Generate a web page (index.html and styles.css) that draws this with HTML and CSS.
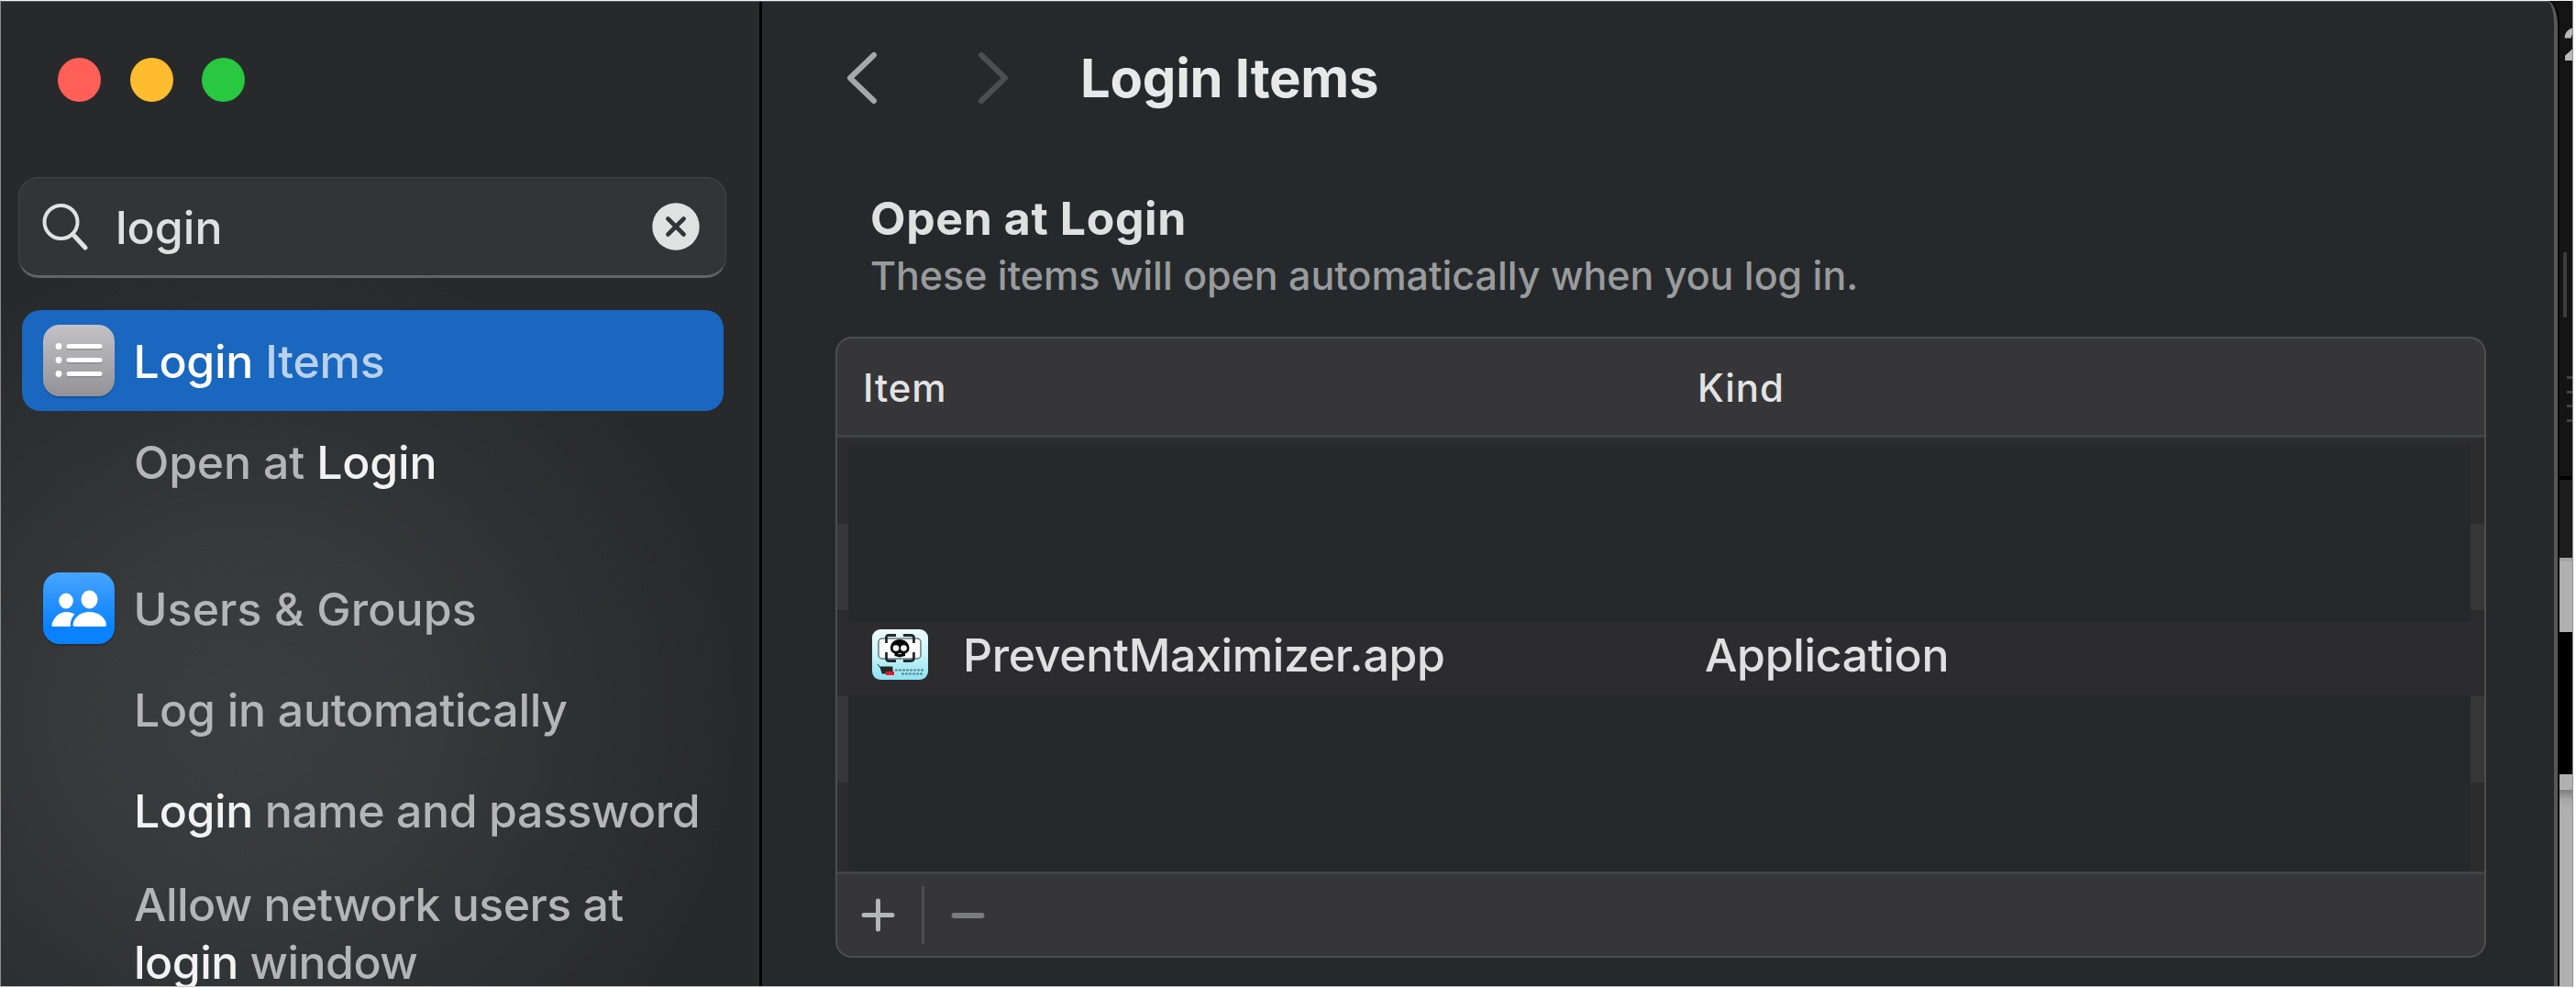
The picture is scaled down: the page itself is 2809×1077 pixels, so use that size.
FILE: index.html
```
<!DOCTYPE html>
<html lang="en">
<head>
<meta charset="utf-8">
<title>Login Items</title>
<link rel="stylesheet" href="styles.css">
</head>
<body>
<div class="screen">
  <div class="window">
    <aside class="sidebar">
      <div class="lights">
        <span class="light red"></span><span class="light yellow"></span><span class="light green"></span>
      </div>
      <div class="search">
        <svg class="search-icon" width="52" height="54" viewBox="0 0 52 54" fill="none" stroke="#e0e1e1" stroke-linecap="round"><circle cx="21.5" cy="22" r="18" stroke-width="4"/><path d="M35 36 48 50" stroke-width="5"/></svg>
        <span class="query">login</span>
        <svg width="52" height="52" viewBox="0 0 52 52"><circle cx="26" cy="26" r="25.7" fill="#e0e1e1"/><path d="M17.500 17.500 34.500 34.500M34.500 17.500 17.500 34.500" stroke="#333435" stroke-width="4.600" stroke-linecap="round"/></svg>
      </div>
      <nav class="results">
        <div class="row selected">
          <svg class="tile" width="80" height="82" viewBox="0 0 80 82">
            <defs><linearGradient id="gray" x2="0" y2="1"><stop offset="0" stop-color="#c3c2c7"/><stop offset="1" stop-color="#929196"/></linearGradient></defs>
            <rect x="1" y="3" width="78" height="78" rx="18" fill="#11498c" opacity=".6"/>
            <rect x="1" y="1" width="78" height="78" rx="18" fill="url(#gray)"/>
            <g fill="#7b7a7f" opacity=".6"><rect x="26.500" y="24" width="39" height="4.600" rx="2.300"/><rect x="26.500" y="39" width="39" height="4.600" rx="2.300"/><rect x="26.500" y="54" width="39" height="4.600" rx="2.300"/></g>
            <g fill="#fff"><circle cx="18" cy="24.500" r="3.400"/><circle cx="18" cy="39.500" r="3.400"/><circle cx="18" cy="54.500" r="3.400"/><rect x="26.500" y="22" width="39" height="5" rx="2.500"/><rect x="26.500" y="37" width="39" height="5" rx="2.500"/><rect x="26.500" y="52" width="39" height="5" rx="2.500"/></g>
          </svg>
          <span class="label"><b>Login</b> Items</span>
        </div>
        <div class="row sub"><span class="label">Open at <b>Login</b></span></div>
        <div class="row group">
          <svg class="tile" width="80" height="82" viewBox="0 0 80 82">
            <defs><linearGradient id="blue" x2="0" y2="1"><stop offset="0" stop-color="#47a5ff"/><stop offset=".75" stop-color="#0a82ff"/><stop offset="1" stop-color="#0a82ff"/></linearGradient></defs>
            <rect x="0.500" y="1" width="79" height="80" rx="18" fill="#1d2530" opacity=".5"/>
            <rect x="1" y="1" width="78" height="78" rx="18" fill="url(#blue)"/>
            <g fill="#fff"><ellipse cx="26" cy="32" rx="7.800" ry="8.600"/><path d="M35.500 46.500C28 42 19 43.500 14 50.500C11.500 54 10.500 56.500 10.500 58.500C10.500 59.500 11 60 12 60H31C30.500 55 31.500 51 35.500 46.500Z"/><ellipse cx="51.500" cy="30.500" rx="9" ry="10"/><path d="M33.500 58C34 51 41 44 51.500 44S69.500 51 70 58Q70 60 68 60H35.500Q33.500 60 33.500 58Z"/></g>
          </svg>
          <span class="label users">Users &amp; Groups</span>
        </div>
        <div class="row sub"><span class="label auto">Log in automatically</span></div>
        <div class="row sub"><span class="label name"><b>Login</b> name and password</span></div>
        <div class="row sub wrap"><span class="label allow">Allow network users at<br><b>login</b> window</span></div>
      </nav>
    </aside>
    <main class="main">
      <header class="toolbar">
        <svg width="34" height="58" viewBox="0 0 34 58" fill="none" stroke="#a5a7a8" stroke-width="6" stroke-linecap="round" stroke-linejoin="round"><path d="M30 4 4 29 30 54"/></svg>
        <svg class="forward" width="34" height="58" viewBox="0 0 34 58" fill="none" stroke="#4c4f51" stroke-width="6" stroke-linecap="round" stroke-linejoin="round"><path d="M4 4 30 29 4 54"/></svg>
        <h1>Login Items</h1>
      </header>
      <section class="intro">
        <h2>Open at Login</h2>
        <p>These items will open automatically when you log in.</p>
      </section>
      <section class="table">
        <div class="thead"><span>Item</span><span>Kind</span></div>
        <div class="tbody">
          <div class="blank"></div>
          <div class="item">
            <svg class="app" width="61" height="55" viewBox="0 0 61 55">
              <defs><linearGradient id="sky" x2="0" y2="1"><stop offset="0" stop-color="#effcff"/><stop offset=".5" stop-color="#c8f3fa"/><stop offset="1" stop-color="#8fe2f2"/></linearGradient></defs>
              <rect width="61" height="55" rx="9" fill="url(#sky)"/>
              <rect x="7" y="10" width="46" height="22" rx="4" fill="#fff" stroke="#68787d" stroke-width="1.500"/>
              <path d="M15.500 15V8.500Q15.500 6.500 18 6.500H26M34 6.500H42Q45.500 6.500 45.500 9V15M45.500 25V31Q45.500 34.500 42 34.500H34M26 34.500H18Q15.500 34.500 15.500 31V25" fill="none" stroke="#222b2e" stroke-width="2.800"/>
              <path d="M30 11C36 11 40.500 15 40.500 20.500Q40.500 25 36 26.500V29L30 30.500 24.500 29V26.500Q20 25 20 20.500C20 15 24 11 30 11Z" fill="#070707"/>
              <circle cx="26" cy="20.500" r="3.300" fill="#fff"/><circle cx="34.500" cy="20.500" r="3.300" fill="#fff"/><path d="M28.500 26.500h3.500" stroke="#ccc" stroke-width="1.200"/>
              <path d="M6 38l3 4M9 41h13v7H11z" stroke="#26282a" fill="#26282a"/><path d="M15 46h9v4h-9z" fill="#e01b22"/>
              <path d="M25 44.500H57M32 48.500H56" stroke="#5c8590" stroke-width="2" stroke-dasharray="3 1"/>
            </svg>
            <span class="file">PreventMaximizer.app</span>
            <span class="kind">Application</span>
          </div>
          <div class="blank"></div>
        </div>
        <div class="tfoot">
          <svg width="37" height="37" viewBox="0 0 37 37" stroke="#b5b6b8" stroke-width="5" stroke-linecap="round"><path d="M3 18.500H34M18.500 3V34"/></svg>
          <i class="split"></i>
          <svg width="37" height="37" viewBox="0 0 37 37" stroke="#7b7c7e" stroke-width="6" stroke-linecap="round"><path d="M3.500 19H33.500"/></svg>
        </div>
      </section>
    </main>
  </div>
  <div class="desktop">
    <div class="clock">2</div>
    <div class="bar"></div>
    <div class="lines"><i></i><i></i><i></i><i></i></div>
    <div class="gap"></div>
    <div class="dark"></div>
    <div class="pale"></div>
    <div class="black"></div>
    <div class="pale short"></div>
    <div class="pale rest"></div>
  </div>
</div>
<svg class="hand" width="140" height="160" viewBox="0 0 420 480" fill="none" stroke="#c1524f" stroke-width="19" stroke-linecap="round"><path d="M303 288V94A27.500 27.500 0 0 0 248 94V215M192 196V170A28 28 0 0 1 245 158M136 206V187A28 28 0 0 1 190 175M136 206A28 28 0 0 0 80 206V318A119 118 0 0 0 199 436C235 436 262 425 285 403L325 363C362 325 354 258 307 220"/></svg>
</body>
</html>
```
FILE: styles.css
```
* { box-sizing: border-box; }

body {
  margin: 0;
  width: 2809px;
  height: 1077px;
  overflow: hidden;
  position: relative;
  font-family: "Inter", sans-serif;
  font-weight: 500;
  background: #fff;
}

svg { display: block; flex: none; }

.screen {
  display: flex;
  width: 2806px;
  height: 1076px;
  overflow: hidden;
  border: 1px solid #8d8f8f;
  border-top-color: #f4f4f4;
  border-bottom-color: #c9c9c9;
  background: #141414;
}

.window {
  display: flex;
  width: 2788px;
  height: 1074px;
  flex: none;
  overflow: hidden;
  border-top: 1px solid #525957;
  border-right: 4px solid #57585b;
  border-top-right-radius: 11px 27px;
  box-shadow: 2px 0 0 #050505;
  background: #25292b;
  z-index: 1;
}

.sidebar {
  width: 830px;
  height: 1073px;
  flex: none;
  overflow: hidden;
  padding: 61px 36px 0 19px;
  border-right: 3px solid #000;
  background: radial-gradient(ellipse 540px 520px at 270px 780px, #3a3e41 0%, #37393b 35%, #2e3133 68%, #27292a 100%);
  background-color: #27292a;
}

.lights { display: flex; gap: 31.500px; padding-left: 43px; }
.light { width: 47px; height: 48px; border-radius: 50%; }
.red { background: #ff5f57; }
.yellow { background: #febc2e; }
.green { background: #28c840; }

.search {
  display: flex;
  align-items: center;
  width: 772px;
  height: 110px;
  margin-top: 82px;
  padding: 0 28px 0 24px;
  border: 1.500px solid #454648;
  border-bottom: 3px solid #626365;
  border-radius: 22px;
  background: #333435;
}
.query {
  flex: 1;
  padding: 1px 0 0 29px;
  font-size: 50px;
  color: #dfe0e0;
}

.results { margin: 35px 0 0 4px; }

.row {
  display: flex;
  align-items: center;
  width: 765px;
  height: 110px;
  padding-left: 22px;
  border-radius: 20px;
}
.selected { background: #1967bf; }
.sub { padding-left: 122px; }
.group { margin-top: 50px; }
.tile { margin-top: 1px; }

.label {
  padding-top: 3px;
  font-size: 50px;
  line-height: 63px;
  letter-spacing: -0.200px;
  white-space: nowrap;
  color: #b3b5b6;
}
.label b { font-weight: 500; color: #f2f2f2; }
.tile + .label { padding-left: 19.500px; }
.selected .label { color: #bad1ec; letter-spacing: -0.300px; }
.selected b { color: #fff; }
.users { letter-spacing: 0.100px; }
.auto { letter-spacing: -0.280px; }
.name { letter-spacing: -0.450px; }
.allow { padding-top: 0; letter-spacing: -0.540px; }
.wrap { height: auto; padding-top: 17px; }

.main { flex: 1; padding: 0 73px 0 80px; }

.toolbar {
  display: flex;
  align-items: center;
  height: 166px;
  padding-left: 12px;
}
.forward { margin-left: 109px; }
h1 {
  margin: 0 0 0 78px;
  font-size: 58px;
  font-weight: 700;
  letter-spacing: -0.290px;
  color: #e7e8e8;
}

.intro { padding: 40px 0 0 38px; }
h2 {
  margin: 0;
  font-size: 50px;
  line-height: 60px;
  font-weight: 700;
  letter-spacing: 0.600px;
  color: #dfe0e0;
}
.intro p {
  margin: 4px 0 0;
  font-size: 43px;
  line-height: 56px;
  font-weight: 500;
  letter-spacing: -0.040px;
  color: #999b9c;
}

.table {
  width: 1800px;
  height: 677px;
  margin-top: 39px;
  overflow: hidden;
  border: 2px solid #4b4d4f;
  border-radius: 18px;
  background: #363638;
}
.thead {
  display: grid;
  grid-template-columns: 910px 1fr;
  align-items: center;
  height: 108px;
  padding: 2px 0 0 28px;
  border-bottom: 3px solid #404244;
  font-size: 42px;
  letter-spacing: 0.900px;
  color: #e2e3e3;
}
.tbody {
  display: grid;
  grid-template-rows: 192px 80px 1fr;
  height: 473px;
  padding: 9px 15px 0 12px;
  background: linear-gradient(#2c2c2e 94px, #373739 94px 188px, #2c2c2e 188px 282px, #373739 282px 376px, #2c2c2e 376px);
}
.blank { background: #25292b; }
.item {
  display: grid;
  grid-template-columns: 99px 809px 1fr;
  align-items: center;
  padding: 0 0 10px 26px;
  background: #2c2c2e;
  font-size: 50px;
  letter-spacing: -0.360px;
  color: #e0e0e1;
}
.item span { padding-top: 1px; }

.tfoot {
  display: flex;
  align-items: center;
  height: 92px;
  padding-left: 26px;
  border-top: 3px solid #404244;
}
.split { width: 3px; height: 63px; margin: 0 29px; background: #4c4d4f; }

.desktop { width: 16px; height: 1074px; overflow: hidden; padding-left: 2px; }
.clock {
  height: 274px;
  padding: 17px 0 0 3px;
  font-size: 50px;
  font-weight: 700;
  color: #b9b9b9;
}
.bar { width: 4px; height: 71px; margin-left: 4px; background: #3b3b3b; }
.lines { display: grid; gap: 12.500px; height: 173px; padding: 64px 0 0 8px; align-content: start; }
.lines i { height: 3px; background: #424242; }
.gap { height: 4px; background: #000; }
.dark { height: 85px; background: #1d1d1d; }
.pale { height: 81px; background: #b0b0b0; border-top: 4px solid #a3a3a3; }
.black { height: 155px; background: #000; }
.short { height: 17px; border: 0; }
.rest { height: 215px; border: 0; background: linear-gradient(#7d7d7d, #a8a8a8 11px, #b0b0b0 22px); }

/* Pointer drawn over the table */
.hand { position: absolute; left: 1180px; top: 750px; }
```
